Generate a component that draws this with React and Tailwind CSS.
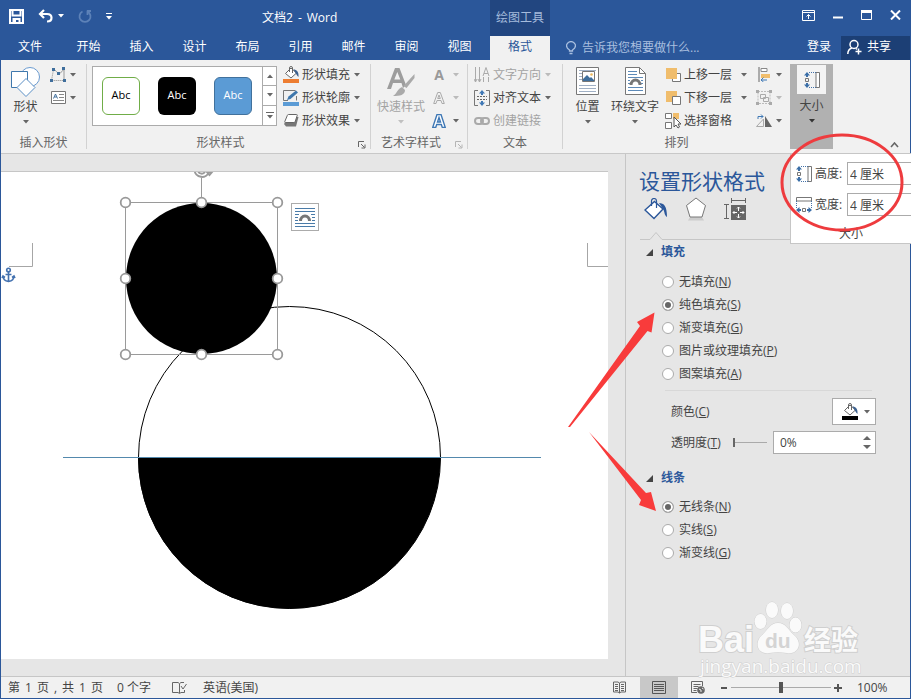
import React from "react";

function Caret({ className = "text-[#666]" }) {
  return (
    <svg width="6" height="4" viewBox="0 0 6 4" className={`shrink-0 ${className}`}>
      <path d="M0 0h6L3 3.5z" fill="currentColor" />
    </svg>
  );
}

function Launcher({ className }) {
  return (
    <button aria-label="更多选项" className={`flex h-full w-4 items-center justify-center pt-1 ${className}`}>
      <svg width="8" height="8" viewBox="0 0 8 8" fill="none" stroke="currentColor">
        <path d="M.5 6V.5H6M3 3l3.5 3.5M7 3.5V7H3.5" />
      </svg>
    </button>
  );
}

function Group({ label, launcher, className, children }) {
  return (
    <section className={`flex shrink-0 flex-col ${className}`}>
      <div className="flex h-[73px]">{children}</div>
      <div className="flex h-5 items-center text-[#666]">
        <span className="flex-1 text-center">{label}</span>
        {launcher && <Launcher className={launcher} />}
      </div>
    </section>
  );
}

function Divider() {
  return <div className="my-1 w-px shrink-0 bg-[#d2d2d2]" />;
}

function Big({ icon, label, className, caret }) {
  return (
    <button className={`flex shrink-0 flex-col items-center pt-[7px] ${className}`}>
      <span className="flex h-[31px] items-start">{icon}</span>
      <span className="h-[18px] leading-[18px] whitespace-nowrap">{label}</span>
      <span className="flex h-3 items-center"><Caret className={caret} /></span>
    </button>
  );
}

function Cmd({ icon, label, caret = true, disabled, className = "" }) {
  return (
    <button disabled={disabled} aria-label={label ? undefined : "选项"} className={`flex h-[23px] items-center gap-[3px] whitespace-nowrap ${disabled ? "text-[#a3a3a3]" : "text-[#444]"} ${className}`}>
      <span className="flex w-4 justify-center">{icon}</span>
      {label && <span>{label}</span>}
      {caret && <span className="ml-px flex"><Caret className={disabled ? "text-[#bbb]" : "text-[#666]"} /></span>}
    </button>
  );
}

const Svg = ({ w = 16, h = 16, children }) => (
  <svg width={w} height={h} viewBox={`0 0 ${w} ${h}`} fill="none" className="shrink-0">{children}</svg>
);

const Bucket = ({ bar, line = "#666", flow = "#3c618f" }) => (
  <Svg w={16} h={17}>
    <path d="M8 2l5.500 5-5.500 5L2.500 7.500zM6.500 6V2a1.500 1.500 0 0 1 3 0v5" fill="#fff" stroke={line} />
    <path d="M10.500 3.500c3 0 5.500 2 5 7.500-1.500-1-2-3-3-4z" fill={flow} />
    <path d="M0 13h16v4H0z" fill={bar} />
  </Svg>
);

function HeightIcon() {
  return (
    <svg width="16" height="16" viewBox="0 0 16 16" fill="none">
      <path d="M12 .5h3.500v15H12z" fill="#fff" stroke="#777" />
      <path d="M5 .5h7M5 15.500h7" stroke="#4472a8" strokeDasharray="1 1" />
      <path d="M3 0l3 3.500H4V5H2V3.500H0zM3 16l3-3.500H4V11H2v1.500H0z" fill="#3a6ea8" />
      <path d="M1.500 6.500h3v3h-3z" stroke="#777" />
    </svg>
  );
}

function WrapIcon() {
  return (
    <Svg w={20} h={20}>
      <path d="M0 1.500h20M0 4.500h20M0 7.500h4M16 7.500h4M0 10.500h3M17 10.500h3M0 13.500h3M17 13.500h3M0 16.500h20M0 19.500h20" stroke="#4a7ba8" />
      <path d="M5.500 14a4.500 5 0 0 1 9 0" stroke="#777" strokeWidth="3" />
    </Svg>
  );
}

function TitleBar() {
  const tabs = ["开始", "插入", "设计", "布局", "引用", "邮件", "审阅", "视图"];
  return (
    <header className="shrink-0 bg-[#2b579a] text-white">
      <div className="flex h-9 items-center">
        <div className="flex w-[111px] items-center pb-1 pl-2">
          <button aria-label="保存">
            <Svg w={15} h={15}><path d="M1 1h13v13H1zM3.500 1v5.500h8V1M4.500 14v-4h6v4" stroke="#fff" strokeWidth="2" /><path d="M5 11h2v3H5z" fill="#fff" /></Svg>
          </button>
          <button aria-label="撤消" className="ml-[14px] flex items-center gap-[5px]">
            <Svg w={15} h={14}><path d="M6 1L2 5l4 4M2.500 5H9c6 0 6 7.500 0 7.500" stroke="#fff" strokeWidth="2.200" /></Svg>
            <Caret className="text-white" />
          </button>
          <button aria-label="重复" disabled className="ml-[14px]">
            <Svg w={14} h={14}><path d="M9 2h4M9.500 1.500V6M9.500 2.500a5.500 5.500 0 1 1-5 0" stroke="#5d82b8" strokeWidth="1.800" /></Svg>
          </button>
          <button aria-label="自定义快速访问工具栏" className="ml-[14px]">
            <Svg w={6} h={7}><path d="M0 .5h6" stroke="#fff" /><path d="M0 3h6L3 6.500z" fill="#fff" /></Svg>
          </button>
        </div>
        <h1 className="flex flex-1 gap-[5px] pl-[150px]"><span>文档2</span><span>-</span><span>Word</span></h1>
        <div className="flex h-9 w-[60px] shrink-0 items-center justify-center bg-[#224680] text-[#a5bbdc]">绘图工具</div>
        <div className="flex w-[360px] shrink-0 items-center justify-end gap-[18px] pr-[9px] pb-[6px]">
          <button aria-label="功能区显示选项"><Svg w={13} h={11}><path d="M.5.5h12v10H.5zM.5 2.500h12M6.500 9V4.500M4.500 6.500l2-2 2 2" stroke="#fff" /></Svg></button>
          <button aria-label="最小化"><Svg w={10} h={10}><path d="M0 7.500h10" stroke="#fff" strokeWidth="2" /></Svg></button>
          <button aria-label="最大化"><Svg w={11} h={10}><path d="M.5.5h10v9H.5z" stroke="#fff" /><path d="M0 0h11v3H0z" fill="#fff" /></Svg></button>
          <button aria-label="关闭"><Svg w={11} h={10}><path d="M1 .5l9 9M10 .5l-9 9" stroke="#fff" strokeWidth="2" /></Svg></button>
        </div>
      </div>
      <nav className="flex h-6 items-stretch">
        <button className="w-[58px] pb-[2px]">文件</button>
        <div className="flex flex-1 pl-[3px]">
          {tabs.map((t) => <button key={t} className="w-[53px] pb-[2px]">{t}</button>)}
        </div>
        <button className="w-[60px] shrink-0 bg-[#f1f1f1] pb-[2px] text-[#2b579a]">格式</button>
        <div className="flex w-[360px] shrink-0 items-stretch">
          <label className="flex flex-1 items-center gap-[6px] pl-4">
            <Svg w={10} h={14}><path d="M3.500 10V9C.5 7 0 5 1 3a4.500 4.500 0 0 1 8 0c1 2 .5 4-2.500 6v1zM3.500 12.500h3" stroke="#a9bfdf" strokeWidth="1.300" /></Svg>
            <input aria-label="告诉我您想要做什么" placeholder="告诉我您想要做什么..." className="w-[130px] bg-transparent outline-none placeholder:text-[#a9bfdf]" />
          </label>
          <button className="w-11 pb-[2px]">登录</button>
          <button className="flex w-[69px] items-center gap-[5px] bg-[#1c3f75] pb-[2px] pl-[6px]">
            <Svg w={15} h={16}><circle cx="7" cy="5.500" r="4" stroke="#fff" strokeWidth="1.500" /><path d="M.8 15c0-3 1.500-5 4-6M9 9.500l1 .8M8.500 12.500h6M11.500 9.500v6" stroke="#fff" strokeWidth="1.500" /></Svg>
            共享
          </button>
        </div>
      </nav>
    </header>
  );
}

function SizePopup() {
  const rows = [["高度:", "shape-height", ""], ["宽度:", "shape-width", "rotate-90 -scale-x-100"]];
  return (
    <div className="absolute top-[93px] left-0 z-20 h-[91px] w-[121px] border border-r-0 border-[#c6c6c6] bg-white pt-1 text-[#444]">
      {rows.map(([label, id, turn]) => (
        <div key={id} className="flex h-[31px] items-center overflow-hidden pl-[5px]">
          <span className={`shrink-0 ${turn}`}><HeightIcon /></span>
          <label htmlFor={id} className="ml-[3px] w-8 shrink-0 whitespace-nowrap">{label}</label>
          <input id={id} defaultValue="4 厘米" className="h-[23px] w-[70px] shrink-0 border border-[#ababab] px-[2px] outline-none" />
        </div>
      ))}
      <div className="mt-[5px] h-[18px] text-center leading-[18px]">大小</div>
      <svg width="128" height="104" viewBox="778 131 128 104" fill="none" className="pointer-events-none absolute -top-[23px] -left-[13px]">
        <ellipse cx="842" cy="182.500" rx="60" ry="47.500" stroke="#ee3b3e" strokeWidth="3" />
      </svg>
    </div>
  );
}

function Ribbon() {
  return (
    <div className="flex h-[94px] shrink-0 border-b border-[#c8c8c8] bg-[#f1f1f1] text-[#444]">
      <Group label="插入形状" className="w-[85px]">
        <Big className="w-[49px]" label="形状" icon={
          <Svg w={30} h={30}>
            <circle cx="19" cy="10" r="9.500" fill="#fff" stroke="#6b9bd0" />
            <path d="M.5 4.500h16v16H.5z" fill="#fff" stroke="#3f78ad" />
            <path d="M15 11.500l9 9-9 9-9-9z" fill="#fff" stroke="#5b8fc5" />
          </Svg>} />
        <div className="pt-[3px]">
          <Cmd icon={<Svg w={16} h={15}><path d="M3.500 2.500C6 3 7 6 9 6.500s3-3.500 5-4M14 2.500v10.500" stroke="#999" /><path d="M3.500 2.500l-2 11h12" stroke="#888" strokeDasharray="1 1" /><path d="M0 12h3v3H0zM13 12h3v3h-3zM2 1h3v3H2zM12 0h3v3h-3zM7 5h3v3H7z" fill="#3f6e9c" /></Svg>} />
          <Cmd icon={<Svg w={15} h={13}><path d="M.5.5h14v12H.5z" fill="#fff" stroke="#777" /><path d="M2.500 7.500L4.500 3l2 4.500M3.500 6h2" stroke="#3f6e9c" /><path d="M8 3.500h5M8 6.500h5M2 9.500h11" stroke="#888" /></Svg>} />
        </div>
      </Group>
      <Divider />
      <Group label="形状样式" launcher="text-[#666]" className="w-[283px]">
        <div className="mt-[6px] ml-[5px] flex h-[60px] w-[185px] border border-[#ababab] bg-white">
          <div className="flex flex-1 items-center gap-[18px] pl-[9px]">
            <button className="h-[38px] w-[38px] rounded-md border border-[#70ad47] pb-[2px] text-[11px] text-black">Abc</button>
            <button className="h-[38px] w-[38px] rounded-md bg-black pb-[2px] text-[11px] text-white">Abc</button>
            <button className="h-[38px] w-[38px] rounded-md border border-[#41719c] bg-[#5b9bd5] pb-[2px] text-[11px] text-white">Abc</button>
          </div>
          <div className="grid w-[14px] grid-rows-3 divide-y divide-[#ababab] border-l border-[#ababab]">
            <button aria-label="上一行" className="flex items-center justify-center"><span className="rotate-180"><Caret /></span></button>
            <button aria-label="下一行" className="flex items-center justify-center"><Caret /></button>
            <button aria-label="其他" className="flex items-center justify-center"><Svg w={8} h={7}><path d="M0 .5h8" stroke="#666" /><path d="M1 3h6L4 6.500z" fill="#666" /></Svg></button>
          </div>
        </div>
        <div className="pt-[3px] pl-[6px]">
          <Cmd label="形状填充" icon={<Bucket bar="#ed7d31" />} />
          <Cmd label="形状轮廓" icon={<Svg w={16} h={16}><path d="M12.500.5H.5v10H5M13.500 6v4.500" stroke="#777" /><path d="M4 10l1.500-3.500L13 .5 15 2.500 7.500 9z" fill="#3f78ad" /><path d="M0 12h16v4H0z" fill="#5b9bd5" /></Svg>} />
          <Cmd label="形状效果" icon={<Svg w={15} h={13}><path d="M5 3h9.500L12 12.500H2L0 10z" fill="#777" /><path d="M4.500.5h8q1 0 .7 1l-2 6q-.3 1-1.300 1H1.500q-1 0-.7-1l2.500-6q.3-1 1.200-1z" fill="#fff" stroke="#666" /></Svg>} />
        </div>
      </Group>
      <Divider />
      <Group label="艺术字样式" launcher="text-[#b5b5b5]" className="w-[96px]">
        <Big className="w-[60px] text-[#a3a3a3]" caret="text-[#c0c0c0]" label="快速样式" icon={
          <Svg w={28} h={30}>
            <path d="M0 22L8 1h4.500l6.500 17-3 3-1.500-5H6l-2 6zM7.300 12.500h6L10.300 5z" fill="#9d9d9d" fillRule="evenodd" />
            <path d="M27.500 7v4l-8 10-3-2zM15 20l3 3c0 5-5 6-12 6 4-2 4-7 9-9z" fill="#aaa" />
          </Svg>} />
        <div className="pt-[3px]">
          <Cmd disabled icon={<span className="text-[14px] font-bold text-[#999]">A</span>} className="gap-[5px]" />
          <Cmd disabled icon={<Svg w={12} h={12}><path d="M.7 11.500l4-11h2.600l4 11H9L8 8.500H4l-1 3zM4.700 6.500h2.600L6 3z" stroke="#aaa" /></Svg>} className="gap-[5px]" />
          <Cmd icon={<Svg w={14} h={14}><path d="M.7 13.500L5 .5h4l4.300 13h-3l-1-3H4.700l-1 3zM5.500 8h3L7 3.500z" fill="#fff" stroke="#3f78b5" strokeWidth="1.400" /></Svg>} className="gap-[5px]" />
        </div>
      </Group>
      <Divider />
      <Group label="文本" className="w-[94px]">
        <div className="pt-[3px] pl-[6px]">
          <Cmd disabled label="文字方向" icon={<Svg w={16} h={16}><path d="M1.500 0v15M5.500 0v15M0 12l1.500 3L3 12M4 12l1.500 3L7 12M9 9l3-8.500L15 9M10 6.500h4M9.500 10v5M14.500 10v5" stroke="#aaa" /></Svg>} />
          <Cmd label="对齐文本" icon={<Svg w={16} h={16}><path d="M4 .5H.5v15H4M12 .5h3.500v15H12" stroke="#777" /><path d="M3 6.500h10M3 9.500h10" stroke="#666" strokeDasharray="2 1" /><path d="M8 0l3 3.500H9V5H7V3.500H5zM8 16l3-3.500H9V11H7v1.500H5z" fill="#3f78b5" /></Svg>} />
          <Cmd disabled caret={false} label="创建链接" icon={<Svg w={16} h={10}><rect x="1" y="2" width="8" height="6" rx="3" stroke="#aaa" strokeWidth="2" /><rect x="7" y="2" width="8" height="6" rx="3" stroke="#aaa" strokeWidth="2" /></Svg>} />
        </div>
      </Group>
      <Divider />
      <Group label="排列" className="w-[227px]">
        <Big className="ml-px w-[47px]" label="位置" icon={
          <Svg w={23} h={28}><path d="M.5.500h22v27H.5z" fill="#fff" stroke="#777" /><path d="M3 3.500h17M3 6.500h3M3 9.500h3M3 12.500h3M3 18.500h17M3 21.500h17M3 24.500h17" stroke="#a0b0c5" /><path d="M6.500 4.500h12v10h-12z" fill="#fff" stroke="#777" /><path d="M7 14v-2l4-4 3 3 1-1 3 3v1z" fill="#3f6e9c" /><circle cx="15.500" cy="7.500" r="1.300" fill="#edb85c" /></Svg>} />
        <Big className="w-12" label="环绕文字" icon={
          <Svg w={21} h={28}><path d="M.5.5h14l6 6v21H.5z" fill="#fff" stroke="#777" /><path d="M14.500.5v6h6" stroke="#777" /><path d="M3 4.500h9M3 7.500h9M3 10.500h15M3 13.500h2M3 16.500h2M16 13.500h2M16 16.500h2M3 20.500h15M3 23.500h15" stroke="#5d8ab8" /><path d="M6 18a4.500 5 0 0 1 9 0" stroke="#777" strokeWidth="3" /></Svg>} />
        <div className="flex flex-1 flex-col pt-[3px] pl-[6px]">
          <div className="flex">
            <Cmd caret={false} label="上移一层" icon={<Svg w={15} h={15}><path d="M6.500 6.500h8v8h-8z" fill="#fff" stroke="#777" /><path d="M0 1h11v11H0z" fill="#f0bd6c" /></Svg>} />
            <button aria-label="上移一层选项" className="flex w-6 items-center justify-center"><Caret /></button>
            <Cmd icon={<Svg w={13} h={15}><path d="M1 0v15" stroke="#666" /><path d="M3 1.500h6v3H3z" fill="#fff" stroke="#888" /><path d="M3 7h9v4H3z" fill="#f0bd6c" /><path d="M3 13h6M5.500 10.500L3 13l2.500 2" stroke="#3f78b5" /></Svg>} />
          </div>
          <div className="flex">
            <Cmd caret={false} label="下移一层" icon={<Svg w={15} h={15}><path d="M0 1h11v11H0z" fill="#f0bd6c" /><path d="M6.500 6.500h8v8h-8z" fill="#fff" stroke="#777" /></Svg>} />
            <button aria-label="下移一层选项" className="flex w-6 items-center justify-center"><Caret /></button>
            <Cmd disabled icon={<Svg w={16} h={15}><path d="M2 1.500h12v12H2z" stroke="#bbb" strokeDasharray="2 1" /><path d="M4.500 4.500h5v4h-5zM7.500 7.500h5v4h-5z" stroke="#aaa" /><path d="M0 0h3v3H0zM13 0h3v3h-3zM0 12h3v3H0zM13 12h3v3h-3z" fill="#aaa" /></Svg>} />
          </div>
          <div className="flex">
            <Cmd caret={false} label="选择窗格" icon={<Svg w={16} h={16}><path d="M.5.5h6v5h-6zM.5 9.500h6v6h-6z" fill="#fff" stroke="#777" /><path d="M8 0h6v6H8z" fill="#f0bd6c" /><path d="M9 4v10l2-2 2 3 1.500-1-1.500-3h3z" fill="#fff" stroke="#555" /></Svg>} />
            <div className="w-6" />
            <Cmd icon={<Svg w={16} h={14}><path d="M.5 12.500h7V5z" stroke="#aaa" /><path d="M9 2v11h7z" fill="#666" /><path d="M2 5V2.500h5M5 .5l2 2-2 2" stroke="#3f78b5" /></Svg>} />
          </div>
        </div>
      </Group>
      <div className="relative flex-1">
        <button className="mt-1 flex h-[85px] w-[43px] flex-col items-center bg-[#b1b1b1] pt-px">
          <span className="flex h-[29px] w-[29px] items-center justify-center bg-[#f3f3f3]"><HeightIcon /></span>
          <span className="mt-[3px] h-[18px] leading-[18px]">大小</span>
          <span className="flex h-3 items-center"><Caret className="text-[#333]" /></span>
        </button>
        <SizePopup />
        <button aria-label="折叠功能区" className="absolute right-[11px] bottom-[5px]"><Svg w={9} h={6}><path d="M1 5l3.500-4L8 5" stroke="#666" strokeWidth="1.600" /></Svg></button>
      </div>
    </div>
  );
}

function Page() {
  const handles = [[125.5, 202.5], [201.5, 202.5], [277.5, 202.5], [125.5, 278.5], [277.5, 278.5], [125.5, 354.5], [201.5, 354.5], [277.5, 354.5]];
  return (
    <div className="relative flex-1 overflow-hidden border-t border-[#c6c6c6] bg-white">
      <svg width="607" height="487" viewBox="1 172 607 487" fill="none">
        <path d="M32.500 243v23.500H9M587.500 243v23.500H608" stroke="#a6a6a6" />
        <circle cx="289.500" cy="457.500" r="151" fill="#fff" stroke="#000" />
        <path d="M138 457.500h302.500a151 151 0 0 1-302.500 0z" fill="#000" />
        <path d="M63 457h478v1H63z" fill="#5389ad" />
        <circle cx="201.500" cy="278.500" r="75.500" fill="#000" />
        <path d="M125.500 202.500h152v152h-152zM201.500 178v24" stroke="#9a9a9a" />
        <path d="M194.500 170a7.500 7.500 0 0 0 14.500 2M198 171a4 4 0 0 0 7 1M207 172h5l-2.500 3z" stroke="#9a9a9a" strokeWidth="2" />
        {handles.map(([x, y]) => <circle key={`${x}-${y}`} cx={x} cy={y} r="4.800" fill="#fff" stroke="#999" strokeWidth="1.800" />)}
        <g stroke="#4472b0" strokeWidth="1.600"><circle cx="8.500" cy="270" r="1.800" /><path d="M8.500 272v9M5.500 274.500h6M3 276c0 3.500 2 5 5.500 5.500 3.500-.5 5.500-2 5.500-5.500M2 278l1-2 2 1.500M15 278l-1-2-2 1.500" /></g>
      </svg>
      <button aria-label="布局选项" className="absolute top-[31px] left-[290px] flex h-7 w-7 items-center justify-center border border-[#ababab] bg-white"><WrapIcon /></button>
    </div>
  );
}

function Radio({ name, text, hot, checked }) {
  return (
    <label className="flex h-[23px] items-center gap-[5px] whitespace-nowrap">
      <input type="radio" name={name} defaultChecked={checked} className="h-3 w-3 appearance-none rounded-full border border-[#ababab] bg-white checked:bg-[#666] checked:shadow-[inset_0_0_0_2px_white]" />
      <span>{text}(<u>{hot}</u>)</span>
    </label>
  );
}

function SectionHead({ children }) {
  return (
    <h3 className="flex h-6 items-center gap-2 pl-[20px] font-bold text-[#2b579a]">
      <Svg w={7} h={7}><path d="M7 0v7H0z" fill="#444" /></Svg>
      {children}
    </h3>
  );
}

function Watermark() {
  return (
    <svg width="170" height="76" viewBox="696 600 170 76" className="relative z-10 mt-auto ml-[70px] shrink-0 overflow-visible" fill="#fafafa" stroke="#cfcfcf">
      <g fontFamily="Liberation Sans, sans-serif" fontWeight="bold" paintOrder="stroke" strokeWidth="2">
        <text x="698" y="652" fontSize="36">Bai</text>
        <ellipse cx="760.5" cy="621.5" rx="6" ry="7.500" strokeWidth="1" />
        <ellipse cx="772" cy="610" rx="6" ry="8" strokeWidth="1" />
        <ellipse cx="787" cy="611" rx="6" ry="8" strokeWidth="1" />
        <ellipse cx="795.5" cy="625" rx="6" ry="7.500" strokeWidth="1" />
        <path d="M778 623c8 0 10 7 16 12 10 9 3 20-7 18-6-1-12-1-18 0-10 2-16-9-7-18 6-5 8-12 16-12z" strokeWidth="1" />
        <text x="765" y="648" fontSize="21" fill="#d4d4d4" stroke="none">du</text>
        <text x="804" y="650" fontSize="27" fontFamily="Noto Sans CJK SC, sans-serif">经验</text>
      </g>
      <text x="700" y="673" fontSize="19" fontFamily="Open Sans, sans-serif" paintOrder="stroke" strokeWidth="1">jingyan.baidu.com</text>
    </svg>
  );
}

function FormatPane() {
  return (
    <aside className="flex w-[285px] shrink-0 flex-col border-l border-[#c6c6c6] pt-[11px] text-[#444]">
      <h2 className="h-8 pl-[13px] text-[21px] leading-8 text-[#2b579a]">设置形状格式</h2>
      <div className="flex h-6 items-center gap-[17px] pl-[18px]">
        <button aria-label="填充与线条">
          <Svg w={24} h={22}><path d="M10.500 3.500L19 11l-9 9.500L1 12z" fill="#fff" stroke="#2b579a" strokeWidth="1.400" /><path d="M7.500 8V3a2.500 2.500 0 0 1 5 0v7" stroke="#2b579a" strokeWidth="1.200" /><path d="M15 5c5 0 8 3 8 14-3-2-2-5-4-8z" fill="#2b579a" /></Svg>
        </button>
        <button aria-label="效果">
          <Svg w={22} h={24}><path d="M5 20h12l2 3.500H3z" fill="#ccc" /><path d="M11 1l9.500 7.500L17 20H5L1.500 8.500z" fill="#fff" stroke="#777" /></Svg>
        </button>
        <button aria-label="布局属性">
          <Svg w={22} h={22}><path d="M7.500 2.500h14M7.500 0v5M21.500 0v5M2.500 6.500v14M0 6.500h5M0 20.500h5" stroke="#666" /><path d="M7 7h15v15H7z" fill="#666" /><path d="M14.500 9v4M14.500 16v4M9 14.500h4M16 14.500h4M13 10.500L14.500 9l1.500 1.500M13 18.500l1.500 1.500 1.500-1.500M10.500 13L9 14.500l1.500 1.500M18.500 13l1.500 1.500-1.500 1.500" stroke="#fff" /></Svg>
        </button>
      </div>
      <div className="mt-2 ml-[14px] flex h-[11px] items-end">
        <svg width="32" height="9" fill="none"><path d="M0 8.500h10l6-7 6 7h10" stroke="#c6c6c6" /></svg>
        <div className="mr-[34px] h-px flex-1 bg-[#c6c6c6]" />
      </div>
      <SectionHead>填充</SectionHead>
      <div className="mt-[6px] pl-9">
        <Radio name="fill" text="无填充" hot="N" />
        <Radio name="fill" text="纯色填充" hot="S" checked />
        <Radio name="fill" text="渐变填充" hot="G" />
        <Radio name="fill" text="图片或纹理填充" hot="P" />
        <Radio name="fill" text="图案填充" hot="A" />
      </div>
      <div className="mt-[5px] mr-[38px] ml-[39px] h-px shrink-0 bg-[#d8d8d8]" />
      <div className="mt-[7px] mr-[34px] flex h-[27px] items-center justify-between pl-[45px]">
        <span>颜色(<u>C</u>)</span>
        <button aria-label="颜色" className="flex h-[27px] w-11 items-center justify-center gap-[6px] border border-[#ababab] bg-white pl-[3px]">
          <Bucket bar="#000" /><Caret />
        </button>
      </div>
      <div className="mt-[6px] mr-[34px] flex h-[23px] items-center pl-[45px]">
        <label htmlFor="opacity" className="w-[62px] whitespace-nowrap">透明度(<u>T</u>)</label>
        <input id="opacity" type="range" min="0" max="100" defaultValue="0" className="h-[9px] w-[34px] appearance-none bg-[linear-gradient(#aaa,#aaa)] bg-[length:100%_1px] bg-center bg-no-repeat [&::-webkit-slider-thumb]:h-[9px] [&::-webkit-slider-thumb]:w-[2px] [&::-webkit-slider-thumb]:appearance-none [&::-webkit-slider-thumb]:bg-[#666]" />
        <div className="ml-auto flex h-[23px] w-[103px] items-center border border-[#ababab] bg-white pr-1 pl-[6px]">
          <input aria-label="透明度百分比" defaultValue="0%" className="min-w-0 flex-1 outline-none" />
          <div className="flex flex-col gap-[5px]">
            <button aria-label="增加" className="rotate-180"><Svg w={8} h={4}><path d="M0 0h8L4 4z" fill="#666" /></Svg></button>
            <button aria-label="减少"><Svg w={8} h={4}><path d="M0 0h8L4 4z" fill="#666" /></Svg></button>
          </div>
        </div>
      </div>
      <div className="mt-3"><SectionHead>线条</SectionHead></div>
      <div className="mt-[5px] pl-9">
        <Radio name="line" text="无线条" hot="N" checked />
        <Radio name="line" text="实线" hot="S" />
        <Radio name="line" text="渐变线" hot="G" />
      </div>
      <Watermark />
    </aside>
  );
}

function StatusBar() {
  return (
    <footer className="flex h-[22px] shrink-0 items-center border-t border-[#c6c6c6] bg-[#f1f1f1] text-[#444]">
      <span className="flex w-[116px] gap-[5px] pl-[7px]"><span>第</span><span>1</span><span>页</span><span>,</span><span>共</span><span>1</span><span>页</span></span>
      <span className="w-[55px]">0 个字</span>
      <button aria-label="校对" className="w-[31px]"><Svg w={15} h={14}><path d="M7.500 3v9M7.500 2.500L6 1.500H.5v10H6l1.500 1 1.500-1h3.500V9M7.500 2.500L9 1.500h3M9 5l2 3 3.500-5" stroke="#666" /></Svg></button>
      <span className="flex-1">英语(美国)</span>
      <button aria-label="阅读视图" className="flex w-[39px] justify-center pr-[2px]"><Svg w={13} h={13}><path d="M6.500 2v10M6.500 2L5 1H.5v10H5l1.500 1L8 11h4.500V1H8zM2 3.500h3M2 5.500h3M2 7.500h3M2 9.500h3M8 3.500h3M8 5.500h3M8 7.500h3M8 9.500h3" stroke="#666" /></Svg></button>
      <button aria-label="页面视图" className="flex h-full w-[38px] items-center justify-center bg-[#c8c8c8]"><Svg w={14} h={13}><path d="M.5.5h13v12H.5zM2 3.500h10M2 5.500h10M2 7.500h10M2 9.500h10" stroke="#555" /></Svg></button>
      <button aria-label="Web 版式" className="flex w-[39px] justify-center"><Svg w={14} h={13}><path d="M6 11.500H.5V.5h11V5M2.500 3.500h7M2.500 5.500h5M2.500 7.500h4M2.500 9.500h3" stroke="#666" /><circle cx="10" cy="9" r="3.800" fill="#666" /><path d="M8 8l2 1v2M11 7l1.500 1" stroke="#eee" /></Svg></button>
      <button aria-label="缩小" className="ml-[3px]"><Svg w={8} h={8}><path d="M1 4h6" stroke="#555" strokeWidth="2" /></Svg></button>
      <input aria-label="显示比例" type="range" min="0" max="100" defaultValue="50" className="mx-[3px] h-[11px] w-[100px] appearance-none bg-[linear-gradient(#aaa,#aaa)] bg-[length:100%_1px] bg-center bg-no-repeat [&::-webkit-slider-thumb]:h-[11px] [&::-webkit-slider-thumb]:w-1 [&::-webkit-slider-thumb]:appearance-none [&::-webkit-slider-thumb]:bg-[#555]" />
      <button aria-label="放大"><Svg w={8} h={8}><path d="M0 4h8M4 0v8" stroke="#555" strokeWidth="2" /></Svg></button>
      <span className="w-[68px] pl-[15px]">100%</span>
    </footer>
  );
}

export default function App() {
  return (
    <div className="flex h-screen flex-col border-x border-b border-[#2b579a] bg-[#e6e6e6] font-['Open_Sans','Noto_Sans_CJK_SC',sans-serif] text-[12px] leading-4">
      <TitleBar />
      <Ribbon />
      <main className="relative flex min-h-0 flex-1">
        <div className="flex min-w-0 flex-1 pt-[17px] pr-[17px] pb-[17px]"><Page /></div>
        <FormatPane />
        <svg width="92" height="206" viewBox="568 310 92 206" className="pointer-events-none absolute top-[156px] right-[251px]" fill="#f83b3b">
          <path d="M569 427L641 326l-3-4 17.500-9.500-3 20-4-1.500L571 427z" />
          <path d="M590 432l57 61 5-1 5 19-17-6 2-5z" />
        </svg>
      </main>
      <StatusBar />
    </div>
  );
}
